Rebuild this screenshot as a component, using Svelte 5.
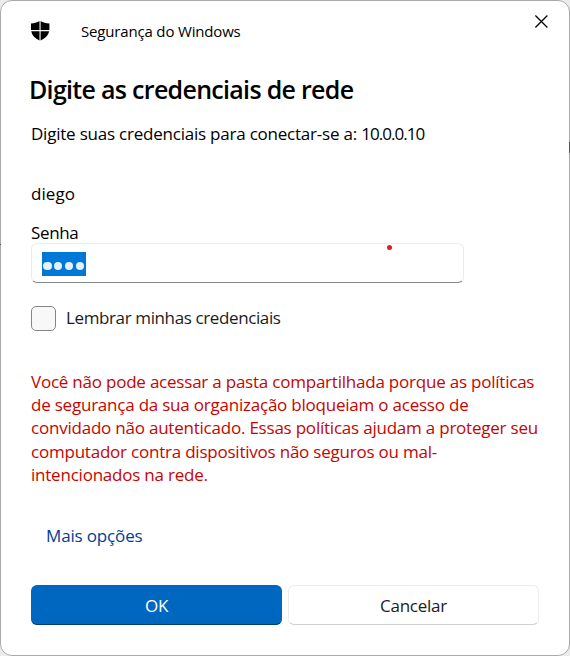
<script>
  const message = [
    'Você não pode acessar a pasta compartilhada porque as políticas',
    'de segurança da sua organização bloqueiam o acesso de',
    'convidado não autenticado. Essas políticas ajudam a proteger seu',
    'computador contra dispositivos não seguros ou mal-',
    'intencionados na rede.'
  ];
</script>

<div class="desktop">
  <i class="edge left"></i>
  <i class="edge right"></i>
  <main class="dialog">
    <header>
      <svg class="shield" width="20" height="21" viewBox="0 0 20 21">
        <path d="M9.5 0C7.2 1.5 4.4 2.2 1 2.4V8.9H9.5ZM10.6 0C12.9 1.5 15.7 2.2 19.4 2.4V8.9H10.6ZM1.2 10.2H9.5V19.6C5.1 17.4 2 14.3 1.2 10.2ZM10.6 10.2H19.2C18.3 14.3 15.1 17.4 10.6 19.6Z" />
      </svg>
      <span class="caption">Segurança do Windows</span>
      <button class="close" aria-label="Fechar">
        <svg width="14" height="14" viewBox="0 0 14 14"><path d="M1.4 1.5 13.4 13.5M13.4 1.5 1.4 13.5" /></svg>
      </button>
    </header>
    <h1>Digite as credenciais de rede</h1>
    <p class="prompt">Digite suas credenciais para conectar-se a: <span class="host">10.0.0.10</span></p>
    <p class="user">diego</p>
    <div class="label">Senha</div>
    <div class="field">
      <span class="selection">{#each [0, 1, 2, 3] as dot (dot)}<i></i>{/each}</span>
      <i class="mark"></i>
    </div>
    <div class="remember"><span class="box"></span><span class="remember-text">Lembrar minhas credenciais</span></div>
    <div class="error">
      {#each message as line, n (n)}<div>{line}</div>{/each}
    </div>
    <div class="more">Mais opções</div>
    <footer>
      <button class="ok">OK</button>
      <button class="cancel">Cancelar</button>
    </footer>
  </main>
</div>

<style>
  :global(body) { margin: 0; }
  .desktop { position: relative; width: 570px; height: 656px; background: #ececec; overflow: hidden; }
  .dialog {
    box-sizing: border-box; width: 570px; height: 656px; padding: 0 30px; background: #fff;
    border: 1px solid #aaa; border-radius: 12px; color: #000;
    font: 17px/24px "Open Sans", "Noto Sans", sans-serif; white-space: nowrap;
  }
  .edge { position: absolute; z-index: 1; background: #555; }
  .left { left: 0; top: 244px; width: 1px; height: 1px; }
  .right { right: 0; top: 142px; width: 1px; height: 11px; }
  button { font: inherit; margin: 0; padding: 0; border: 0; background: none; }
  header { display: flex; height: 59px; padding-top: 19px; box-sizing: border-box; margin-right: -9px; }
  .shield { flex: none; margin: 1px 0 0 -1px; }
  .caption { margin-left: 31px; font-size: 15px; line-height: 22px; letter-spacing: -.17px; }
  .close { margin: -6px 0 0 auto; width: 14px; height: 14px; line-height: 0; }
  .close path { stroke: #000; stroke-width: 1.25; fill: none; }
  h1 { margin: 13px 0 0 -2px; font-size: 25px; line-height: 32px; font-weight: 600; letter-spacing: -.7px; }
  p { margin: 0; }
  .prompt { margin-top: 17px; letter-spacing: -.22px; }
  .host { letter-spacing: -.95px; }
  .user { margin-top: 36px; letter-spacing: .05px; }
  .label { margin-top: 15px; letter-spacing: -.35px; }
  .field {
    position: relative; box-sizing: border-box; width: 433px; height: 40px; margin-top: -2px; padding: 8px 10px;
    border: 1px solid #ececec; border-bottom-color: #868686; border-radius: 6px;
  }
  .selection { display: flex; box-sizing: border-box; width: 44px; height: 24px; padding: 9.7px 2px 0 1.4px; background: #0078d7; gap: 2.6px; }
  .selection i { width: 8.2px; height: 8.2px; flex: none; border-radius: 50%; background: #e5f1fb; }
  .mark { position: absolute; left: 355px; top: 1px; width: 5px; height: 5px; border-radius: 50%; background: #e81b23; }
  .remember { display: flex; align-items: center; height: 25px; margin-top: 23px; color: #1b1b1b; }
  .box { box-sizing: border-box; width: 25px; height: 25px; border: 1px solid #868686; border-radius: 5px; background: #f8f8f8; }
  .remember-text { margin: -2px 0 0 10px; letter-spacing: -.38px; }
  .error { margin-top: 39px; color: #c50500; line-height: 23.2px; letter-spacing: -.22px; }
  .more { margin: 38px 0 0 15px; color: #003e92; letter-spacing: -.15px; }
  footer { display: flex; gap: 6px; margin-top: 37px; }
  footer button { box-sizing: border-box; width: 251px; height: 40px; padding-top: 1px; border-radius: 6px; text-align: center; letter-spacing: -.25px; }
  footer .ok { padding-top: 2px; background: #0067c0; color: #fff; border-bottom: 1px solid #003e73; }
  .cancel { color: #1b1b1b; border: 1px solid #ececec; border-bottom-color: #d0d0d0; }
</style>
